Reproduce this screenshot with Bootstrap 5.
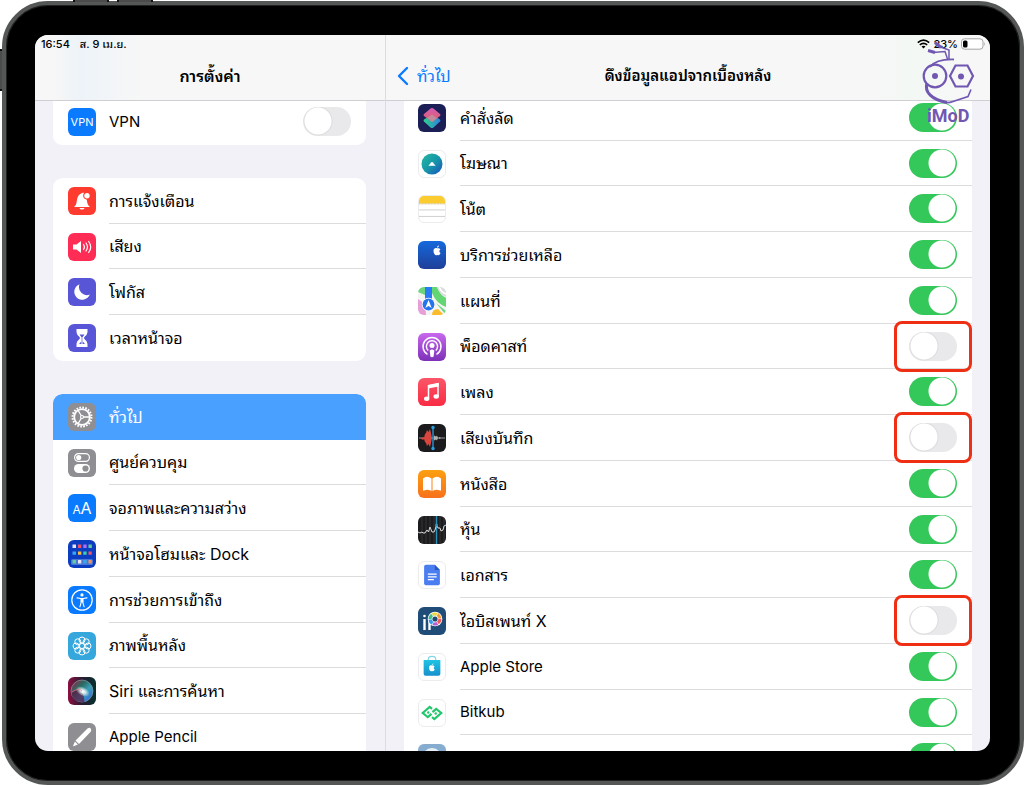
<!DOCTYPE html>
<html lang="th">
<head>
<meta charset="utf-8">
<meta name="viewport" content="width=device-width, initial-scale=1">
<title>การตั้งค่า</title>
<link href="https://cdn.jsdelivr.net/npm/bootstrap@5.3.0/dist/css/bootstrap.min.css" rel="stylesheet">
<style>
  body { font-family: Inter, "Noto Sans Thai Looped", "Noto Sans Thai", "Liberation Sans", sans-serif; font-size: 16px; background: #fff; color: #000; }
  .stage { height: 100vh; padding: 1px 0 0 2px; }
  .tablet { background: #000; border: 4px solid #555757; border-radius: 46px; padding: 30px 30px 30px 29px; box-shadow: inset 0 0 0 1px #222; }
  .hw-key { position: absolute; background: #4b4b4b; border: solid #111; border-width: 0 2px; height: 2px; width: 36px; top: 0; }
  .hw-key.up { left: 73px; }
  .hw-key.down { left: 117px; }
  .hw-key.power { left: 0; top: 49px; width: 2px; height: 42px; border-width: 2px 0; }
  .screen { background: #f2f1f7; border-radius: 13px; }
  .sidebar { flex: 0 0 350px; }
  .detail { border-left: 1px solid #dcdce0; }
  .topbar { height: 65px; background: #f7f7f7; box-shadow: 0 1px #cfcfd3; position: relative; z-index: 2; }
  .sidebar .topbar { background: linear-gradient(90deg, #f7f7f7 5%, #edf3f8 13%, #f2f5f8 20%, #f7f7f7 32%); }
  .detail .topbar { background: linear-gradient(90deg, #f7f7f7 78%, #f3f8f4 88%, #f7f7f7 97%); }
  .status { height: 18px; font-size: 11px; line-height: 18px; font-weight: 500; padding: 0 4px 0 6px; }
  .clock { gap: 10px; }
  .gauges { gap: 3px; }
  .title-row { padding-top: 11px; }
  .bar-title { font-size: 16px; line-height: 24px; font-weight: 600; }
  .detail .bar-title { font-size: 15px; }
  .back { color: #0a7aff; font-size: 16px; line-height: 24px; left: 11px; }
  .scroller { padding: 0 18px; }
  .sidebar .scroller { padding-right: 19px; }
  .group { --bs-list-group-border-radius: 9px; margin-bottom: 33px; border-radius: 9px; overflow: hidden; }
  .group.first { margin-top: -1px; border-radius: 0 0 9px 9px; }
  .group.first .entry { border-radius: 0; }
  .apps { --bs-list-group-border-radius: 0; margin-top: -5px; }
  .entry { height: 46px; border: 0; padding: 0 0 0 14px; gap: 14px; color: #000; background: #fff; }
  .sidebar .entry { padding-left: 15px; gap: 13px; }
  .entry:nth-child(4n+2) { height: 45px; }
  .entry > .txt { border-bottom: 1px solid #dcdcdf; height: 100%; padding-right: 15px; min-width: 0; line-height: 24px; }
  .entry > .txt.latin { font-size: 15px; }
  .entry:last-child > .txt, .entry.active > .txt { border-bottom-color: transparent; }
  .entry.active { background: #4aa0ff; color: #fff; margin: 0; }
  .entry > svg { width: 28px; height: 28px; border-radius: 6px; flex: none; }
  .entry > svg.pale { border: 1px solid #ececee; }
  .toggle { width: 48px; height: 29px; display: block; }
  .toggle input.form-check-input { width: 48px; height: 29px; margin: 0; border: 0; border-radius: 15px; background: #e9e9eb radial-gradient(circle at 15px 14px, #fff 13px, #dcdcdf 14px, transparent 15px); }
  .toggle input.form-check-input:checked { background: #34c759 radial-gradient(circle at 33px 14px, #fff 13px, transparent 14px); }
  .marked::after { content: ""; position: absolute; inset: -11px -15px; border: 3px solid #ee2f14; border-radius: 8px; pointer-events: none; }
  .brand { position: absolute; right: 10px; top: 4px; width: 62px; height: 90px; color: #7157b2; z-index: 3; pointer-events: none; }
  svg text { font-family: Inter, sans-serif; }
  .brand text { font: 700 18px Roboto, sans-serif; }
</style>
</head>
<body>
<div class="stage position-relative d-flex">
  <span class="hw-key up"></span><span class="hw-key down"></span><span class="hw-key power"></span>
  <div class="tablet flex-grow-1 d-flex">
    <div class="screen position-relative d-flex flex-grow-1 overflow-hidden">

      <aside class="sidebar d-flex flex-column overflow-hidden">
        <header class="topbar flex-shrink-0">
          <div class="status clock d-flex"><span>16:54</span><span>ส. 9 เม.ย.</span></div>
          <div class="title-row"><h1 class="bar-title text-center m-0">การตั้งค่า</h1></div>
        </header>
        <nav class="scroller flex-grow-1 overflow-hidden">
          <div class="group first list-group">
            <div class="entry list-group-item d-flex align-items-center">
              <svg viewBox="0 0 28 28"><rect width="28" height="28" fill="#0a7aff"/><text x="14" y="18" font-size="11" text-anchor="middle" fill="#fff">VPN</text></svg>
              <div class="txt latin flex-grow-1 d-flex align-items-center justify-content-between"><label for="vpn">VPN</label><span class="toggle"><input class="form-check-input" type="checkbox" role="switch" id="vpn"></span></div>
            </div>
          </div>

          <div class="group list-group">
            <a href="#" class="entry list-group-item d-flex align-items-center">
              <svg viewBox="0 0 28 28"><rect width="28" height="28" fill="#ff3b30"/><path d="M6 20c2.500-2 2.500-4 3-7.500.5-3.500 2.500-5.500 5-6.500 1-.4 1.600-.2 2 0a4.200 4.200 0 0 0 2.800 6.700c.4 3.300.7 5 3.200 7.300zM11.500 21h5c-.5 2-4.500 2-5 0z" fill="#fff"/><circle cx="19" cy="8.700" r="2.700" fill="#fff"/></svg>
              <span class="txt flex-grow-1 d-flex align-items-center">การแจ้งเตือน</span></a>
            <a href="#" class="entry list-group-item d-flex align-items-center">
              <svg viewBox="0 0 28 28"><rect width="28" height="28" fill="#ff2d55"/><path d="M5 11.500h3.500L13 8v12l-4.500-3.500H5z" fill="#fff"/><path d="M15.500 11.500q1.800 2.500 0 5M18 10q3 4 0 8M20.700 8.500q4 5.500 0 11" fill="none" stroke="#fff" stroke-width="1.200" stroke-linecap="round"/></svg>
              <span class="txt flex-grow-1 d-flex align-items-center">เสียง</span></a>
            <a href="#" class="entry list-group-item d-flex align-items-center">
              <svg viewBox="0 0 28 28"><rect width="28" height="28" fill="#5856d6"/><path d="M11.500 6.300a8 8 0 1 0 10.300 10.300A8 8 0 0 1 11.500 6.300z" fill="#fff"/></svg>
              <span class="txt flex-grow-1 d-flex align-items-center">โฟกัส</span></a>
            <a href="#" class="entry list-group-item d-flex align-items-center">
              <svg viewBox="0 0 28 28"><rect width="28" height="28" fill="#5856d6"/><path d="M8.500 5h11v2.500c0 4-3.500 5-3.500 6.500s3.500 2.500 3.500 6.500V23h-11v-2.500c0-4 3.500-5 3.500-6.500s-3.500-2.500-3.500-6.500z" fill="#fff"/><path d="M11.500 10.500h5L14.700 13v4.500l2.300 2.500h-6l2.300-2.500V13z" fill="#5856d6"/><path d="M14 13v7" stroke="#fff"/></svg>
              <span class="txt flex-grow-1 d-flex align-items-center">เวลาหน้าจอ</span></a>
          </div>

          <div class="group list-group">
            <a href="#" class="entry active list-group-item d-flex align-items-center" aria-current="page">
              <svg viewBox="0 0 28 28"><rect width="28" height="28" fill="#8e8e93"/><circle cx="14" cy="14" r="9.500" fill="none" stroke="#fff" stroke-width="2" stroke-dasharray="1.700 1.284"/><circle cx="14" cy="14" r="7.800" fill="none" stroke="#fff" stroke-width="1.800"/><path d="M14 14h7.500M14 14l-3.800-6.500M14 14l-3.800 6.500" stroke="#fff" stroke-width="1.300"/><circle cx="14" cy="14" r="2" fill="#fff"/><circle cx="14" cy="14" r=".9" fill="#8e8e93"/></svg>
              <span class="txt flex-grow-1 d-flex align-items-center">ทั่วไป</span></a>
            <a href="#" class="entry list-group-item d-flex align-items-center">
              <svg viewBox="0 0 28 28"><rect width="28" height="28" fill="#8e8e93"/><rect x="6.600" y="4.600" width="14.800" height="7.800" rx="3.900" fill="none" stroke="#fff" stroke-width="1.200"/><circle cx="10.700" cy="8.500" r="2.600" fill="#fff"/><rect x="6" y="15" width="16" height="9" rx="4.500" fill="#fff"/><circle cx="17.500" cy="19.500" r="3.100" fill="#8e8e93"/></svg>
              <span class="txt flex-grow-1 d-flex align-items-center">ศูนย์ควบคุม</span></a>
            <a href="#" class="entry list-group-item d-flex align-items-center">
              <svg viewBox="0 0 28 28"><rect width="28" height="28" fill="#0a7aff"/><text x="4.500" y="20" font-size="12" fill="#fff">A</text><text x="12.500" y="20" font-size="16" fill="#fff">A</text></svg>
              <span class="txt flex-grow-1 d-flex align-items-center">จอภาพและความสว่าง</span></a>
            <a href="#" class="entry list-group-item d-flex align-items-center">
              <svg viewBox="0 0 28 28"><rect width="28" height="28" fill="#0c3cc0"/><rect x="3" y="19" width="22" height="6" rx="1.500" fill="#4a76d8"/><g><path d="M4.500 4.500H8V8H4.500zM10 20h3.300v3.500H10z" fill="#e6e4f2"/><path d="M10 4.500h3.300V8H10zM20.500 11.500h3.300v3.300h-3.300z" fill="#f0526a"/><path d="M15.300 4.500h3.300V8h-3.300z" fill="#b06cf2"/><path d="M20.500 4.500h3.300V8h-3.300zM4.500 20H8v3.500H4.500z" fill="#5fce9c"/><path d="M4.500 11.500H8v3.300H4.500zM15.300 20h3.300v3.500h-3.300z" fill="#35a8f0"/><path d="M10 11.500h3.300v3.300H10z" fill="#f5bd3d"/><path d="M15.300 11.500h3.300v3.300h-3.300z" fill="#3dcdb0"/><path d="M20.500 20h3.300v3.500h-3.300z" fill="#f09060"/></g></svg>
              <span class="txt flex-grow-1 d-flex align-items-center">หน้าจอโฮมและ Dock</span></a>
            <a href="#" class="entry list-group-item d-flex align-items-center">
              <svg viewBox="0 0 28 28"><rect width="28" height="28" fill="#0a7aff"/><circle cx="14" cy="14" r="10.200" fill="none" stroke="#fff" stroke-width="1.200"/><circle cx="14" cy="8.900" r="1.600" fill="#fff"/><path d="M9 11.900l3.700.6h2.600l3.700-.6M13.300 13v3l-1.400 4.800M14.700 13v3l1.400 4.800" fill="none" stroke="#fff" stroke-width="1.100" stroke-linecap="round"/><path d="M12.600 12.300h2.800v4h-2.800z" fill="#fff"/></svg>
              <span class="txt flex-grow-1 d-flex align-items-center">การช่วยการเข้าถึง</span></a>
            <a href="#" class="entry list-group-item d-flex align-items-center">
              <svg viewBox="0 0 28 28"><rect width="28" height="28" fill="#35a7dc"/><g fill="none" stroke="#fff" stroke-width="1"><circle cx="14" cy="14" r="2.600"/><circle cx="14" cy="8" r="3"/><circle cx="18.200" cy="9.800" r="3"/><circle cx="20" cy="14" r="3"/><circle cx="18.200" cy="18.200" r="3"/><circle cx="14" cy="20" r="3"/><circle cx="9.800" cy="18.200" r="3"/><circle cx="8" cy="14" r="3"/><circle cx="9.800" cy="9.800" r="3"/></g></svg>
              <span class="txt flex-grow-1 d-flex align-items-center">ภาพพื้นหลัง</span></a>
            <a href="#" class="entry list-group-item d-flex align-items-center">
              <svg viewBox="0 0 28 28"><defs><linearGradient id="s1"><stop offset="0" stop-color="#8a1040"/><stop offset=".5" stop-color="#2a1c34"/><stop offset="1" stop-color="#05302c"/></linearGradient><linearGradient id="s2" x1="0" y1="0" x2="1" y2="1"><stop offset="0" stop-color="#b01848"/><stop offset=".35" stop-color="#286a62"/><stop offset=".6" stop-color="#3aa0b8"/><stop offset="1" stop-color="#3658e8"/></linearGradient><radialGradient id="s3"><stop offset="0" stop-color="#fff"/><stop offset=".3" stop-color="#fff" stop-opacity=".85"/><stop offset="1" stop-color="#fff" stop-opacity="0"/></radialGradient></defs><rect width="28" height="28" fill="url(#s1)"/><circle cx="14" cy="14" r="11" fill="url(#s2)" stroke="#8aa8a8" stroke-width=".6"/><path d="M3.500 16q6-5 10-2 3 6 3 11-12 1-13-9z" fill="#5b1440" opacity=".7"/><ellipse cx="15" cy="14.500" rx="7.500" ry="4.500" fill="url(#s3)" transform="rotate(28 15 14)"/><path d="M4 15q7-5 10-1" stroke="#ff6c8b" fill="none" opacity=".7"/></svg>
              <span class="txt flex-grow-1 d-flex align-items-center">Siri และการค้นหา</span></a>
            <a href="#" class="entry list-group-item d-flex align-items-center">
              <svg viewBox="0 0 28 28"><rect width="28" height="28" fill="#8e8e93"/><path d="M19.500 5.500q2-1.300 3.200 0t0 3.200L11 21 7.500 17.500zM6.900 18.400l3 3-4.200 1.800q-.8 0-.5-.8z" fill="#fff"/></svg>
              <span class="txt latin flex-grow-1 d-flex align-items-center">Apple Pencil</span></a>
          </div>
        </nav>
      </aside>

      <main class="detail flex-grow-1 d-flex flex-column overflow-hidden">
        <header class="topbar flex-shrink-0">
          <div class="status gauges d-flex justify-content-end align-items-center">
            <svg width="13" height="10" viewBox="0 0 13 10"><path d="M.8 3.600q5.700-5 11.400 0M2.800 5.900q3.700-3.200 7.400 0" fill="none" stroke="#000" stroke-width="1.700"/><path d="M4.500 7.500q2-1.600 4 0l-2 2z"/></svg>
            <span>23%</span>
            <svg width="25" height="12" viewBox="0 0 25 12"><rect x=".5" y=".8" width="21.500" height="10.400" rx="3" fill="#fff" stroke="#a5a5a8"/><rect x="2" y="2.500" width="4.500" height="7" rx="1.500"/><path d="M23.300 4v4q1.500-2 0-4z" fill="#999"/></svg>
          </div>
          <div class="title-row position-relative">
            <a href="#" class="back position-absolute d-flex align-items-center text-decoration-none"><svg width="12" height="20" viewBox="0 0 12 20" class="me-2"><path d="M10 2L2 10l8 8" fill="none" stroke="currentColor" stroke-width="2.400" stroke-linecap="round" stroke-linejoin="round"/></svg>ทั่วไป</a>
            <h2 class="bar-title text-center m-0">ดึงข้อมูลแอปจากเบื้องหลัง</h2>
          </div>
        </header>
        <div class="scroller flex-grow-1 overflow-hidden">
          <div class="apps list-group">
            <div class="entry list-group-item d-flex align-items-center">
              <svg viewBox="0 0 28 28"><defs><linearGradient id="a1" x2="0" y2="1"><stop stop-color="#e460c0"/><stop offset="1" stop-color="#f0685c"/></linearGradient><linearGradient id="a2"><stop stop-color="#2fd08c"/><stop offset="1" stop-color="#3080e0"/></linearGradient></defs><rect width="28" height="28" fill="#1b1f55"/><path d="M14 10.500l8 5q1 1 0 2l-6.500 6q-1.500 1-3 0L6 17.500q-1-1 0-2z" fill="url(#a2)"/><path d="M12.500 4.500q1.500-1 3 0L22 10q1 1 0 2l-8 6-8-6q-1-1 0-2z" fill="url(#a1)" opacity=".92"/><path d="M14 10.500l5 4-5 3.500-5-4z" fill="#b0a0b0" opacity=".6"/></svg>
              <div class="txt flex-grow-1 d-flex align-items-center justify-content-between"><label for="a01">คำสั่งลัด</label><span class="toggle"><input class="form-check-input" type="checkbox" role="switch" id="a01" checked></span></div></div>
            <div class="entry list-group-item d-flex align-items-center">
              <svg class="pale" viewBox="0 0 28 28"><defs><linearGradient id="b1" x2="1" y2="1"><stop stop-color="#22b8a0"/><stop offset=".5" stop-color="#1698a8"/><stop offset="1" stop-color="#1a50c0"/></linearGradient></defs><circle cx="14" cy="14" r="11.300" fill="url(#b1)"/><path d="M10 16l3.500-3.800q.5-.5 1 0L18 16z" fill="#fff"/></svg>
              <div class="txt flex-grow-1 d-flex align-items-center justify-content-between"><label for="a02">โฆษณา</label><span class="toggle"><input class="form-check-input" type="checkbox" role="switch" id="a02" checked></span></div></div>
            <div class="entry list-group-item d-flex align-items-center">
              <svg class="pale" viewBox="0 0 28 28"><path d="M0 0h28v8H0z" fill="#fccb2f"/><path d="M0 8.500h28" stroke="#c8b684" stroke-dasharray="1 .6"/><path d="M0 15h28M0 22h28" stroke="#ccc"/></svg>
              <div class="txt flex-grow-1 d-flex align-items-center justify-content-between"><label for="a03">โน้ต</label><span class="toggle"><input class="form-check-input" type="checkbox" role="switch" id="a03" checked></span></div></div>
            <div class="entry list-group-item d-flex align-items-center">
              <svg viewBox="0 0 28 28"><defs><linearGradient id="c1" x2="0" y2="1"><stop stop-color="#1569dc"/><stop offset="1" stop-color="#1f3f98"/></linearGradient></defs><rect width="28" height="28" fill="url(#c1)"/><path d="M19 7.300c-1-.6-3.500-.5-3.500 2.700 0 2.500 1.600 4.200 2.600 4.200.5 0 .6-.3 1.200-.3s.8.300 1.200.300c.8 0 1.700-1.300 2-2.300-1.500-.8-1.500-2.800-.1-3.500-.8-1.300-2.300-1.300-3.400-1.100zM19 6.800c0-1.300.8-2.100 1.900-2.300 0 1.300-.8 2.200-1.900 2.300z" fill="#fff"/></svg>
              <div class="txt flex-grow-1 d-flex align-items-center justify-content-between"><label for="a04">บริการช่วยเหลือ</label><span class="toggle"><input class="form-check-input" type="checkbox" role="switch" id="a04" checked></span></div></div>
            <div class="entry list-group-item d-flex align-items-center">
              <svg viewBox="0 0 28 28"><rect width="28" height="28" fill="#f4f4f2"/><path d="M0 0h7v8L0 5z" fill="#6ad57a"/><path d="M14 0h5q3 8 9 11v9q-10-4-14-14z" fill="#62d672"/><path d="M19 0h9v10q-7-3-9-10z" fill="#dcdce0"/><path d="M21 0q2 5 7 7" stroke="#fff" stroke-width="1.500" fill="none"/><path d="M0 12q8 4 8 16H0z" fill="#e79fd8"/><path d="M14 28q0-6 6-6l6 6z" fill="#fbbc2c"/><path d="M18 16l10 8v4z" fill="#6ad57a"/><path d="M7 0h7v14H7z" fill="#2a7cf4"/><circle cx="10.500" cy="17.500" r="6.700" fill="#fff"/><circle cx="10.500" cy="17.500" r="5.900" fill="#2474ee"/><path d="M10.500 13l3.200 8-3.200-2-3.200 2z" fill="#fff"/></svg>
              <div class="txt flex-grow-1 d-flex align-items-center justify-content-between"><label for="a05">แผนที่</label><span class="toggle"><input class="form-check-input" type="checkbox" role="switch" id="a05" checked></span></div></div>
            <div class="entry z-1 list-group-item d-flex align-items-center">
              <svg viewBox="0 0 28 28"><defs><linearGradient id="d1" x2="0" y2="1"><stop stop-color="#c868ee"/><stop offset="1" stop-color="#7d30b8"/></linearGradient></defs><rect width="28" height="28" fill="url(#d1)"/><g fill="none" stroke="#fff" stroke-width="1.400"><path d="M9.500 21.300a9 9 0 1 1 9 0M10.200 17.500a5.600 5.600 0 1 1 7.600 0"/></g><circle cx="14" cy="12.500" r="2.500" fill="#fff"/><path d="M11.700 17.500q2.300-2 4.600 0l-.7 6q-1.600 1.500-3.200 0z" fill="#fff"/></svg>
              <div class="txt flex-grow-1 d-flex align-items-center justify-content-between"><label for="a06">พ็อดคาสท์</label><span class="toggle marked position-relative"><input class="form-check-input" type="checkbox" role="switch" id="a06"></span></div></div>
            <div class="entry list-group-item d-flex align-items-center">
              <svg viewBox="0 0 28 28"><defs><linearGradient id="e1" x2="0" y2="1"><stop stop-color="#fb5668"/><stop offset="1" stop-color="#f92b44"/></linearGradient></defs><rect width="28" height="28" fill="url(#e1)"/><path d="M10.500 20V7.700l9.500-2V18" fill="none" stroke="#fff" stroke-width="1.500"/><path d="M10 7.300l10.700-2.200v3.300L10 10.500z" fill="#fff"/><ellipse cx="8.700" cy="20.700" rx="2.700" ry="2.200" fill="#fff"/><ellipse cx="18.200" cy="18.500" rx="2.700" ry="2.200" fill="#fff"/></svg>
              <div class="txt flex-grow-1 d-flex align-items-center justify-content-between"><label for="a07">เพลง</label><span class="toggle"><input class="form-check-input" type="checkbox" role="switch" id="a07" checked></span></div></div>
            <div class="entry z-1 list-group-item d-flex align-items-center">
              <svg viewBox="0 0 28 28"><rect width="28" height="28" fill="#1b1b1d"/><path d="M1 14h26" stroke="#b8b8ba" stroke-width=".8"/><path d="M2 14h2l1-1 1 1 1-4 1-1 1-3 1.500 2L12 5l1 4 1 5-1 5-1 4-1.500-3L9 22l-1-3-1-1-1-3-1 1z" fill="#d8463e"/><path d="M16 11.500l2 1 1-1 1 2.500-1 2.500-1-1-2 1zM21 13l2 1-2 1z" fill="#b0b0b2"/><path d="M15 3v22" stroke="#2a9ce0" stroke-width="1.300"/><circle cx="15" cy="3.500" r="1.700" fill="#2a9ce0"/><circle cx="15" cy="24.500" r="1.700" fill="#2a9ce0"/></svg>
              <div class="txt flex-grow-1 d-flex align-items-center justify-content-between"><label for="a08">เสียงบันทึก</label><span class="toggle marked position-relative"><input class="form-check-input" type="checkbox" role="switch" id="a08"></span></div></div>
            <div class="entry list-group-item d-flex align-items-center">
              <svg viewBox="0 0 28 28"><defs><linearGradient id="f1" x2="0" y2="1"><stop stop-color="#fba010"/><stop offset="1" stop-color="#f8701c"/></linearGradient></defs><rect width="28" height="28" fill="url(#f1)"/><path d="M13.500 8.500V21q-4-2-7.500-.5-1 .5-1-.5V8.500q4-3.500 8.500 0zM14.500 8.500V21q4-2 7.500-.5 1 .5 1-.5V8.500q-4-3.500-8.500 0z" fill="#fff"/></svg>
              <div class="txt flex-grow-1 d-flex align-items-center justify-content-between"><label for="a09">หนังสือ</label><span class="toggle"><input class="form-check-input" type="checkbox" role="switch" id="a09" checked></span></div></div>
            <div class="entry list-group-item d-flex align-items-center">
              <svg viewBox="0 0 28 28"><rect width="28" height="28" fill="#1c1c1e"/><path d="M4 0v28M8 0v28M12 0v28M16 0v28M22 0v28M26 0v28" stroke="#414144" stroke-width=".7"/><path d="M18.500 0v28" stroke="#2793bd" stroke-width="1.400"/><path d="M0 16l2 1 2-1 1 1 2 0 2-3 1.500 2L12 11l2 5 2 0 1-2 1.500-5 1.500 3 2 0 1 3 2-1 1-4 2-1" fill="none" stroke="#d8d8da" stroke-width="1"/><circle cx="18.500" cy="9" r="1.500" fill="#2793bd"/></svg>
              <div class="txt flex-grow-1 d-flex align-items-center justify-content-between"><label for="a10">หุ้น</label><span class="toggle"><input class="form-check-input" type="checkbox" role="switch" id="a10" checked></span></div></div>
            <div class="entry list-group-item d-flex align-items-center">
              <svg class="pale" viewBox="0 0 28 28"><path d="M7.500 3H17l5.500 5.500V23q0 2-2 2h-13q-2 0-2-2V5q0-2 2-2z" fill="#4a7df0"/><path d="M17 3l5.500 5.500H17z" fill="#2858c0"/><path d="M9.500 13h9.500M9.500 16h9.500M9.500 19h6.500" stroke="#fff" stroke-width="1.400"/></svg>
              <div class="txt flex-grow-1 d-flex align-items-center justify-content-between"><label for="a11">เอกสาร</label><span class="toggle"><input class="form-check-input" type="checkbox" role="switch" id="a11" checked></span></div></div>
            <div class="entry z-1 list-group-item d-flex align-items-center">
              <svg viewBox="0 0 28 28"><rect width="28" height="28" fill="#1f4d78"/><path d="M6.500 12v11M11.500 12v11" stroke="#fff" stroke-width="2.400"/><circle cx="6.500" cy="9" r="1.300" fill="#fff"/><circle cx="17" cy="12" r="7.300" fill="#fff"/><g fill="none" stroke-width="3.200"><circle cx="17" cy="12" r="5" stroke="#f05a5a" pathLength="60" stroke-dasharray="9 51"/><circle cx="17" cy="12" r="5" stroke="#b060d0" pathLength="60" stroke-dasharray="9 51" stroke-dashoffset="-10"/><circle cx="17" cy="12" r="5" stroke="#3a9be8" pathLength="60" stroke-dasharray="9 51" stroke-dashoffset="-20"/><circle cx="17" cy="12" r="5" stroke="#40c080" pathLength="60" stroke-dasharray="9 51" stroke-dashoffset="-30"/><circle cx="17" cy="12" r="5" stroke="#e8d840" pathLength="60" stroke-dasharray="9 51" stroke-dashoffset="-40"/><circle cx="17" cy="12" r="5" stroke="#f59a3c" pathLength="60" stroke-dasharray="9 51" stroke-dashoffset="-50"/></g><circle cx="17" cy="12" r="2.600" fill="#1f4d78"/></svg>
              <div class="txt flex-grow-1 d-flex align-items-center justify-content-between"><label for="a12">ไอบิสเพนท์ X</label><span class="toggle marked position-relative"><input class="form-check-input" type="checkbox" role="switch" id="a12"></span></div></div>
            <div class="entry list-group-item d-flex align-items-center">
              <svg class="pale" viewBox="0 0 28 28"><defs><linearGradient id="g1" x2="0" y2="1"><stop stop-color="#20c4e4"/><stop offset="1" stop-color="#1690cc"/></linearGradient></defs><path d="M10 7V5.500q0-3 4-3t4 3V7" fill="none" stroke="#7cd6ea" stroke-width="1.200"/><path d="M5 6.500h18V21q0 2.500-2 2.500H7q-2 0-2-2.500z" fill="url(#g1)"/><path d="M14 12.500c-1-.6-3.200-.3-3.200 2.300 0 2 1.300 3.700 2.200 3.700.4 0 .6-.3 1.100-.3s.6.300 1.100.3c.7 0 1.400-1 1.700-2-1.300-.6-1.300-2.400-.1-3-.8-1.200-2-1.100-2.800-1zM14 12q.1-1.800 1.600-2.100 0 1.900-1.600 2.100z" fill="#fff"/></svg>
              <div class="txt latin flex-grow-1 d-flex align-items-center justify-content-between"><label for="a13">Apple Store</label><span class="toggle"><input class="form-check-input" type="checkbox" role="switch" id="a13" checked></span></div></div>
            <div class="entry list-group-item d-flex align-items-center">
              <svg class="pale" viewBox="0 0 28 28"><g fill="none" stroke="#22c76c" stroke-width="2.300"><path d="M14 9.500L11.500 7.500 4 14l5.500 4.500 4-3.500"/><path d="M14 18.500l2.500 2L24 14l-5.500-4.500-4 3.500"/></g><circle cx="10" cy="13.500" r="1.300" fill="#22c76c"/><circle cx="18" cy="14.500" r="1.300" fill="#22c76c"/></svg>
              <div class="txt latin flex-grow-1 d-flex align-items-center justify-content-between"><label for="a14">Bitkub</label><span class="toggle"><input class="form-check-input" type="checkbox" role="switch" id="a14" checked></span></div></div>
            <div class="entry list-group-item d-flex align-items-center">
              <svg viewBox="0 0 28 28"><rect width="28" height="28" fill="#86acd0"/><circle cx="14" cy="14" r="10" fill="#e8f0f7"/><circle cx="14" cy="14" r="7" fill="#86acd0"/></svg>
              <div class="txt flex-grow-1 d-flex align-items-center justify-content-end"><span class="toggle"><input class="form-check-input" type="checkbox" role="switch" checked aria-label="เปิด"></span></div></div>
          </div>
        </div>
      </main>

      <svg class="brand" viewBox="0 0 62 90">
        <g fill="none" stroke="currentColor" stroke-width="2.200">
          <circle cx="17" cy="37" r="11.300"/>
          <path d="M32 37l5.500-10.500h12L55 37l-5.500 10.500h-12z"/>
          <path d="M12 28q6-8 24-7.500" stroke-width="1.800"/>
          <path d="M31 20V11L22.500 8 17 3.500M29.500 20l-2.500-7.500-12 1" stroke-width="1.500"/>
          <path d="M10 11.500l7 2M17 3.500l6 5" stroke-width="3"/>
          <path d="M9 44c-3 9 5 17 20 19.500" stroke-width="3"/>
          <path d="M25 63q5 1.500 10-.500l15-5 3-7" stroke-width="1.600"/>
        </g>
        <circle cx="17" cy="37" r="3" fill="currentColor"/><circle cx="43" cy="37.500" r="3" fill="currentColor"/>
        <text x="9" y="83" fill="currentColor">iMoD</text>
      </svg>
    </div>
  </div>
</div>
<script src="https://cdn.jsdelivr.net/npm/bootstrap@5.3.0/dist/js/bootstrap.bundle.min.js"></script>
</body>
</html>
